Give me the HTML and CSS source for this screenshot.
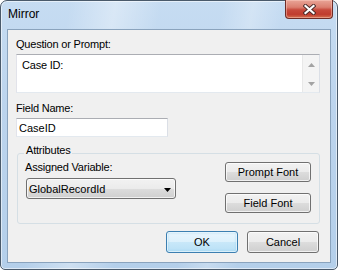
FILE: index.html
```html
<!DOCTYPE html>
<html lang="en">
	<head>
		<meta charset="UTF-8">
		<meta content="width=device-width, initial-scale=1.0" name="viewport">
		<link rel="stylesheet" href="styles.css">
		<title>Mirror</title>
	</head>
	<body>
		<div class="window">
			<div class="titlebar">
				<span class="title">Mirror</span>
				<div class="close-button">
					<svg width="13" height="11" viewBox="0 0 13 11">
						<path d="M2.5 2 L10.5 9 M10.5 2 L2.5 9" stroke="#4a2a28" stroke-width="4" stroke-linecap="square"/>
						<path d="M2.5 2 L10.5 9 M10.5 2 L2.5 9" stroke="#ffffff" stroke-width="2.2" stroke-linecap="square"/>
					</svg>
				</div>
			</div>
			<div class="client">
				<div class="label">Question or Prompt:</div>
				<div class="memo">
					<div class="memo-text">Case ID:</div>
					<div class="scrollbar">
						<svg width="7" height="4" viewBox="0 0 7 4"><polygon points="3.5,0 7,4 0,4" fill="#a3a3a3"/></svg>
						<svg width="7" height="4" viewBox="0 0 7 4"><polygon points="0,0 7,0 3.5,4" fill="#a3a3a3"/></svg>
					</div>
				</div>
				<div class="label field-label">Field Name:</div>
				<div class="textbox">CaseID</div>
				<div class="group">
					<span class="group-title">Attributes</span>
					<div class="group-left">
						<div class="label">Assigned Variable:</div>
						<div class="combo">
							<span>GlobalRecordId</span>
							<svg width="7" height="4" viewBox="0 0 7 4"><polygon points="0,0 7,0 3.5,4" fill="#000"/></svg>
						</div>
					</div>
					<div class="group-right">
						<div class="button font-button">Prompt Font</div>
						<div class="button font-button">Field Font</div>
					</div>
				</div>
				<div class="actions">
					<div class="button default-button">OK</div>
					<div class="button">Cancel</div>
				</div>
			</div>
		</div>
	</body>
</html>
```
FILE: styles.css
```css
body {
    margin: 0;
    font-family: "Liberation Sans", Arial, sans-serif;
    font-size: 11px;
    color: #000;
}

.window {
    width: 338px;
    height: 270px;
    box-sizing: border-box;
    display: flex;
    flex-direction: column;
    border: 1px solid #4a5a6b;
    border-radius: 7px 7px 5px 5px;
    box-shadow: inset 0 0 0 1px rgba(255, 255, 255, 0.55);
    background:
        linear-gradient(100deg, transparent 18%, rgba(255, 255, 255, 0.35) 30%, transparent 42%, transparent 58%, rgba(255, 255, 255, 0.25) 66%, transparent 74%),
        linear-gradient(180deg, #c6dcf2 0%, #bcd4ed 40%, #b4cfea 100%);
}

.titlebar {
    height: 28px;
    display: flex;
    justify-content: space-between;
    align-items: flex-start;
    padding: 0 4px 0 7px;
}

.title {
    margin-top: 6px;
    font-size: 12px;
    line-height: 15px;
}

.close-button {
    width: 46px;
    height: 18px;
    margin-top: -1px;
    display: flex;
    align-items: center;
    justify-content: center;
    border: 1px solid #6e2c26;
    border-top: none;
    border-radius: 0 0 4px 4px;
    box-shadow: inset 0 0 0 1px rgba(255, 210, 200, 0.45);
    background: linear-gradient(180deg, #e9a597 0%, #db7f70 40%, #c7493b 55%, #c03c2e 80%, #d4704f 100%);
}

.client {
    flex: 1;
    margin: 0 6px 6px;
    padding: 8px 0 0 8px;
    border: 1px solid #8aa3bd;
    background-color: #f0f0f0;
}

.label {
    line-height: 13px;
    letter-spacing: -0.2px;
}

.memo {
    width: 304px;
    height: 39px;
    box-sizing: border-box;
    margin-top: 3px;
    display: flex;
    border: 1px solid;
    border-color: #abadb3 #dbdfe6 #e3e9ef #e2e3ea;
    background-color: #FFF;
}

.memo-text {
    flex: 1;
    padding: 4px 5px;
    line-height: 13px;
    letter-spacing: -0.2px;
}

.scrollbar {
    width: 16px;
    display: flex;
    flex-direction: column;
    justify-content: space-between;
    align-items: center;
    padding: 8px 0 6px;
    border-left: 1px solid #e8e8e8;
    background-color: #f4f4f4;
}

.field-label {
    margin-top: 9px;
}

.textbox {
    width: 152px;
    height: 19px;
    box-sizing: border-box;
    margin-top: 3px;
    padding: 3px 2px 0;
    line-height: 13px;
    border: 1px solid;
    border-color: #abadb3 #dbdfe6 #e3e9ef #e2e3ea;
    background-color: #FFF;
}

.group {
    position: relative;
    width: 303px;
    height: 71px;
    box-sizing: border-box;
    margin: 16px 0 0 1px;
    padding: 7px 8px 0 7px;
    display: flex;
    justify-content: space-between;
    align-items: flex-start;
    border: 1px solid #d5dfe5;
    border-radius: 3px;
}

.group-title {
    position: absolute;
    top: -10px;
    left: 6px;
    padding: 0 2px;
    line-height: 13px;
    letter-spacing: -0.2px;
    background-color: #f0f0f0;
}

.combo {
    width: 150px;
    height: 21px;
    box-sizing: border-box;
    margin: 4px 0 0 1px;
    padding: 4px 4px 0 2px;
    display: flex;
    justify-content: space-between;
    align-items: flex-start;
    line-height: 13px;
    border: 1px solid #707070;
    border-radius: 3px;
    box-shadow: inset 0 0 0 1px rgba(255, 255, 255, 0.7);
    background: linear-gradient(180deg, #f2f2f2 0%, #ebebeb 50%, #dddddd 50%, #cfcfcf 100%);
}

.combo svg {
    margin-top: 5px;
}

.group-right {
    margin-top: 1px;
    display: flex;
    flex-direction: column;
    gap: 11px;
}

.button {
    width: 72px;
    height: 22px;
    box-sizing: border-box;
    display: flex;
    align-items: center;
    justify-content: center;
    line-height: 13px;
    border: 1px solid #707070;
    border-radius: 3px;
    box-shadow: inset 0 0 0 1px rgba(255, 255, 255, 0.7);
    background: linear-gradient(180deg, #f2f2f2 0%, #ebebeb 50%, #dddddd 50%, #cfcfcf 100%);
}

.font-button {
    width: 86px;
    height: 20px;
}

.actions {
    width: 303px;
    margin-top: 7px;
    display: flex;
    justify-content: flex-end;
    gap: 9px;
}

.default-button {
    border-color: #3c7fb1;
    box-shadow: inset 0 0 0 1px rgba(255, 255, 255, 0.6), inset 0 0 2px 1px rgba(120, 200, 240, 0.5);
    background: linear-gradient(180deg, #eaf6fd 0%, #dcf1fc 50%, #c9e8f9 50%, #b8e0f6 100%);
}
```
